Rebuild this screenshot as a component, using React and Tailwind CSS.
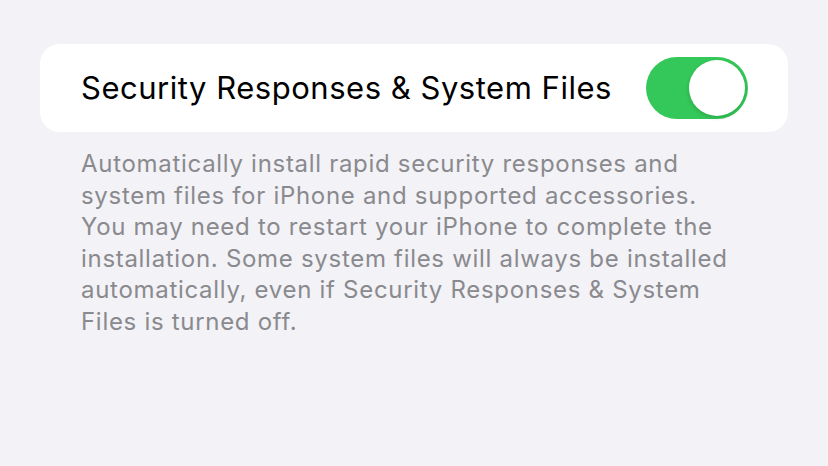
export default function App() {
  return (
    <div className="w-[828px] h-[466px] bg-[#f2f2f7] pt-[44px] px-[40px]" style={{ fontFamily: 'Inter, "Noto Sans", sans-serif' }}>
      <div className="h-[88px] bg-white rounded-[20px] flex items-center justify-between pl-[41px] pr-[40px]">
        <span className="text-[31px] text-black tracking-[0.52px]">Security Responses &amp; System Files</span>
        <div className="w-[102px] h-[62px] rounded-full bg-[#34c759] p-[3px] flex justify-end">
          <div className="w-[56px] h-[56px] rounded-full bg-white shadow-[0_2px_4px_rgba(0,0,0,0.15)]" />
        </div>
      </div>
      <p className="pl-[41px] pt-[16px] text-[24px] leading-[31.5px] text-[#8a8a8e] tracking-[0.7px] whitespace-nowrap">
        Automatically install rapid security responses and<br />
        system files for iPhone and supported accessories.<br />
        You may need to restart your iPhone to complete the<br />
        installation. Some system files will always be installed<br />
        automatically, even if Security Responses &amp; System<br />
        Files is turned off.
      </p>
    </div>
  );
}
